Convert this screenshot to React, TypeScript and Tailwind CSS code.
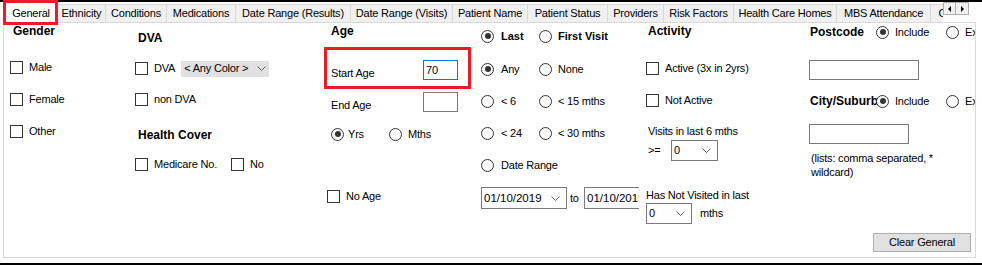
import React from 'react'

const FONT = 'font-["Liberation_Sans",Arial,sans-serif]'
const TXT = 'text-[11px] leading-[13px] tracking-[-0.2px] text-black whitespace-nowrap'
const HEAD = 'text-[12px] leading-[14px] font-bold text-black whitespace-nowrap'

const TABS: { label: string; w: string }[] = [
  { label: 'Ethnicity', w: 'w-[48px]' },
  { label: 'Conditions', w: 'w-[61px]' },
  { label: 'Medications', w: 'w-[69px]' },
  { label: 'Date Range (Results)', w: 'w-[115px]' },
  { label: 'Date Range (Visits)', w: 'w-[102px]' },
  { label: 'Patient Name', w: 'w-[75px]' },
  { label: 'Patient Status', w: 'w-[80px]' },
  { label: 'Providers', w: 'w-[56px]' },
  { label: 'Risk Factors', w: 'w-[70px]' },
  { label: 'Health Care Homes', w: 'w-[103px]' },
  { label: 'MBS Attendance', w: 'w-[94px]' },
  { label: 'Clinical', w: 'w-[50px]' },
]

function Chevron() {
  return (
    <svg width="9" height="5" viewBox="0 0 9 5" className="shrink-0">
      <path d="M0.5 0.5 L4.5 4.5 L8.5 0.5" fill="none" stroke="#606060" strokeWidth="1" />
    </svg>
  )
}

function Check({ label, className = '' }: { label: string; className?: string }) {
  return (
    <div className={`flex items-center ${className}`}>
      <span className="w-[13px] h-[13px] border border-[#333] bg-white shrink-0" />
      <span className={`ml-[6px] ${TXT}`}>{label}</span>
    </div>
  )
}

function Radio({ label, checked = false, bold = false, gap = 'ml-[7px]', className = '' }: {
  label: string
  checked?: boolean
  bold?: boolean
  gap?: string
  className?: string
}) {
  return (
    <div className={`flex items-center shrink-0 ${className}`}>
      <span className="w-[13px] h-[13px] rounded-full border border-[#333] bg-white flex items-center justify-center shrink-0">
        {checked && <span className="w-[6px] h-[6px] rounded-full bg-[#333]" />}
      </span>
      <span className={`${gap} ${bold ? 'text-[11px] leading-[13px] font-bold text-black whitespace-nowrap' : TXT}`}>{label}</span>
    </div>
  )
}

function Dropdown({ value, w, date = false }: { value: string; w: string; date?: boolean }) {
  return (
    <div className={`${w} h-[21px] border border-[#7a7a7a] bg-white flex items-center justify-between pl-[2px] pr-[6px] shrink-0 overflow-hidden`}>
      <span className={date ? 'text-[11.5px] leading-[13px] text-black whitespace-nowrap' : TXT}>{value}</span>
      <Chevron />
    </div>
  )
}

function TabStrip() {
  return (
    <div className="flex h-[20px]">
      <div className="flex items-end w-[943px] overflow-hidden pl-[4px]">
        <div className="relative z-10 w-[54px] h-[21px] -mb-[1px] bg-white border border-b-0 border-[#d9d9d9] flex items-center justify-center shrink-0">
          <span className={TXT}>General</span>
        </div>
        {TABS.map((t) => (
          <div
            key={t.label}
            className={`${t.w} h-[18px] bg-[#f0f0f0] border-t border-r border-[#d9d9d9] flex items-center justify-center shrink-0 overflow-hidden`}
          >
            <span className={TXT}>{t.label}</span>
          </div>
        ))}
      </div>
      <div className="flex h-[13px]">
        <div className="w-[13px] h-[13px] bg-[#f0f0f0] border border-[#adadad] flex items-center justify-center">
          <span className="w-0 h-0 border-y-[3px] border-y-transparent border-r-[3px] border-r-black" />
        </div>
        <div className="w-[13px] h-[13px] bg-[#f0f0f0] border border-l-0 border-[#adadad] flex items-center justify-center">
          <span className="w-0 h-0 border-y-[3px] border-y-transparent border-l-[3px] border-l-black" />
        </div>
      </div>
    </div>
  )
}

export default function App() {
  return (
    <div className={`relative w-[982px] h-[265px] bg-white overflow-hidden ${FONT}`}>
      <div className="h-[2px] bg-black" />
      <TabStrip />

      <div className="ml-[3px] w-[973px] h-[236px] border border-[#d9d9d9] flex pl-[6px]">
        {/* Gender */}
        <div className="w-[125px] shrink-0 flex flex-col">
          <div className={`h-[16px] flex items-center pl-[3px] ${HEAD}`}>Gender</div>
          <div className="mt-[12px]">
            <Check label="Male" className="h-[32px]" />
            <Check label="Female" className="h-[32px]" />
            <Check label="Other" className="h-[32px]" />
          </div>
        </div>

        {/* DVA / Health Cover */}
        <div className="w-[189px] shrink-0 flex flex-col">
          <div className={`h-[30px] flex items-center pl-[3px] ${HEAD}`}>DVA</div>
          <div className="h-[31px] flex items-center">
            <Check label="DVA" />
            <div className="ml-[6px] w-[88px] h-[16px] bg-[#e1e1e1] flex items-center justify-between pl-[3px] pr-[3px]">
              <span className={TXT}>&lt; Any Color &gt;</span>
              <Chevron />
            </div>
          </div>
          <Check label="non DVA" className="h-[31px]" />
          <div className={`h-[40px] flex items-center pl-[3px] ${HEAD}`}>Health Cover</div>
          <div className="h-[18px] flex items-center">
            <Check label="Medicare No." className="w-[96px]" />
            <Check label="No" />
          </div>
        </div>

        {/* Age */}
        <div className="w-[157px] shrink-0 flex flex-col">
          <div className={`h-[16px] flex items-center pl-[7px] ${HEAD}`}>Age</div>
          <div className="mt-[8px] w-[147px] h-[42px] border-[3px] border-[#e81e25] flex items-end pt-[10px] pb-[6px]">
            <span className={`w-[96px] pl-[4px] ${TXT}`}>Start Age</span>
            <div className="w-[35px] h-[20px] border border-[#0078d7] bg-white flex items-center pl-[2px]">
              <span className={TXT}>70</span>
            </div>
          </div>
          <div className="mt-[3px] flex items-end">
            <span className={`w-[99px] pl-[7px] ${TXT}`}>End Age</span>
            <div className="w-[35px] h-[20px] border border-[#7a7a7a] bg-white" />
          </div>
          <div className="mt-[14px] h-[16px] flex items-center pl-[7px]">
            <Radio label="Yrs" checked gap="ml-[4px]" className="w-[58px]" />
            <Radio label="Mths" gap="ml-[6px]" />
          </div>
          <Check label="No Age" className="mt-[46px] h-[16px] pl-[3px]" />
        </div>

        {/* Last / First Visit */}
        <div className="w-[165px] shrink-0 flex flex-col">
          <div className="mt-[5px] h-[16px] flex items-center">
            <Radio label="Last" checked bold className="w-[58px]" />
            <Radio label="First Visit" bold gap="ml-[6px]" />
          </div>
          <div className="mt-[9px]">
            <div className="h-[32px] flex items-center">
              <Radio label="Any" checked className="w-[58px]" />
              <Radio label="None" gap="ml-[6px]" />
            </div>
            <div className="h-[32px] flex items-center">
              <Radio label="< 6" className="w-[58px]" />
              <Radio label="< 15 mths" gap="ml-[6px]" />
            </div>
            <div className="h-[32px] flex items-center">
              <Radio label="< 24" className="w-[58px]" />
              <Radio label="< 30 mths" gap="ml-[6px]" />
            </div>
            <div className="h-[32px] flex items-center">
              <Radio label="Date Range" />
            </div>
          </div>
          <div className="mt-[6px] w-[158px] h-[22px] overflow-hidden flex items-center">
            <Dropdown value="01/10/2019" w="w-[86px] h-[22px]" date />
            <span className={`ml-[3px] w-[14px] shrink-0 ${TXT}`}>to</span>
            <Dropdown value="01/10/2019" w="w-[86px] h-[22px]" date />
          </div>
        </div>

        {/* Activity */}
        <div className="w-[163px] shrink-0 flex flex-col">
          <div className={`h-[16px] flex items-center pl-[2px] ${HEAD}`}>Activity</div>
          <div className="mt-[13px]">
            <Check label="Active (3x in 2yrs)" className="h-[32px]" />
            <Check label="Not Active" className="h-[32px]" />
          </div>
          <div className={`mt-[9px] pl-[2px] ${TXT}`}>Visits in last 6 mths</div>
          <div className="mt-[2px] flex items-center">
            <span className={`w-[25px] pl-[2px] ${TXT}`}>&gt;=</span>
            <Dropdown value="0" w="w-[47px]" />
          </div>
          <div className={`mt-[28px] ${TXT}`}>Has Not Visited in last</div>
          <div className="mt-[1px] flex items-center">
            <Dropdown value="0" w="w-[46px]" />
            <span className={`ml-[8px] ${TXT}`}>mths</span>
          </div>
        </div>

        {/* Postcode / City */}
        <div className="w-[166px] shrink-0 flex flex-col overflow-hidden">
          <div className="h-[18px] flex items-center">
            <span className={`w-[67px] pl-[1px] shrink-0 ${HEAD}`}>Postcode</span>
            <Radio label="Include" checked gap="ml-[6px]" className="w-[70px]" />
            <Radio label="Exclude" gap="ml-[6px]" />
          </div>
          <div className="mt-[19px] w-[110px] h-[20px] border border-[#7a7a7a] bg-white" />
          <div className="mt-[12px] h-[18px] flex items-center">
            <span className={`w-[67px] pl-[1px] shrink-0 ${HEAD}`}>City/Suburb</span>
            <Radio label="Include" checked gap="ml-[6px]" className="w-[70px]" />
            <Radio label="Exclude" gap="ml-[6px]" />
          </div>
          <div className="mt-[14px] w-[100px] h-[20px] border border-[#7a7a7a] bg-white" />
          <p className="mt-[7px] pl-[2px] w-[142px] text-[11px] leading-[14px] tracking-[-0.2px] text-black">
            (lists: comma separated, * wildcard)
          </p>
          <button className="mt-[54px] ml-[64px] w-[98px] h-[19px] bg-[#e1e1e1] border border-[#adadad] flex items-center justify-center">
            <span className={TXT}>Clear General</span>
          </button>
        </div>
      </div>

      <div className="h-[5px]" />
      <div className="h-[2px] bg-black" />

      {/* annotation around the selected tab */}
      <div className="absolute z-20 left-[3px] top-0 w-[55px] h-[25px] border-[3px] border-[#e81e25]" />
    </div>
  )
}
